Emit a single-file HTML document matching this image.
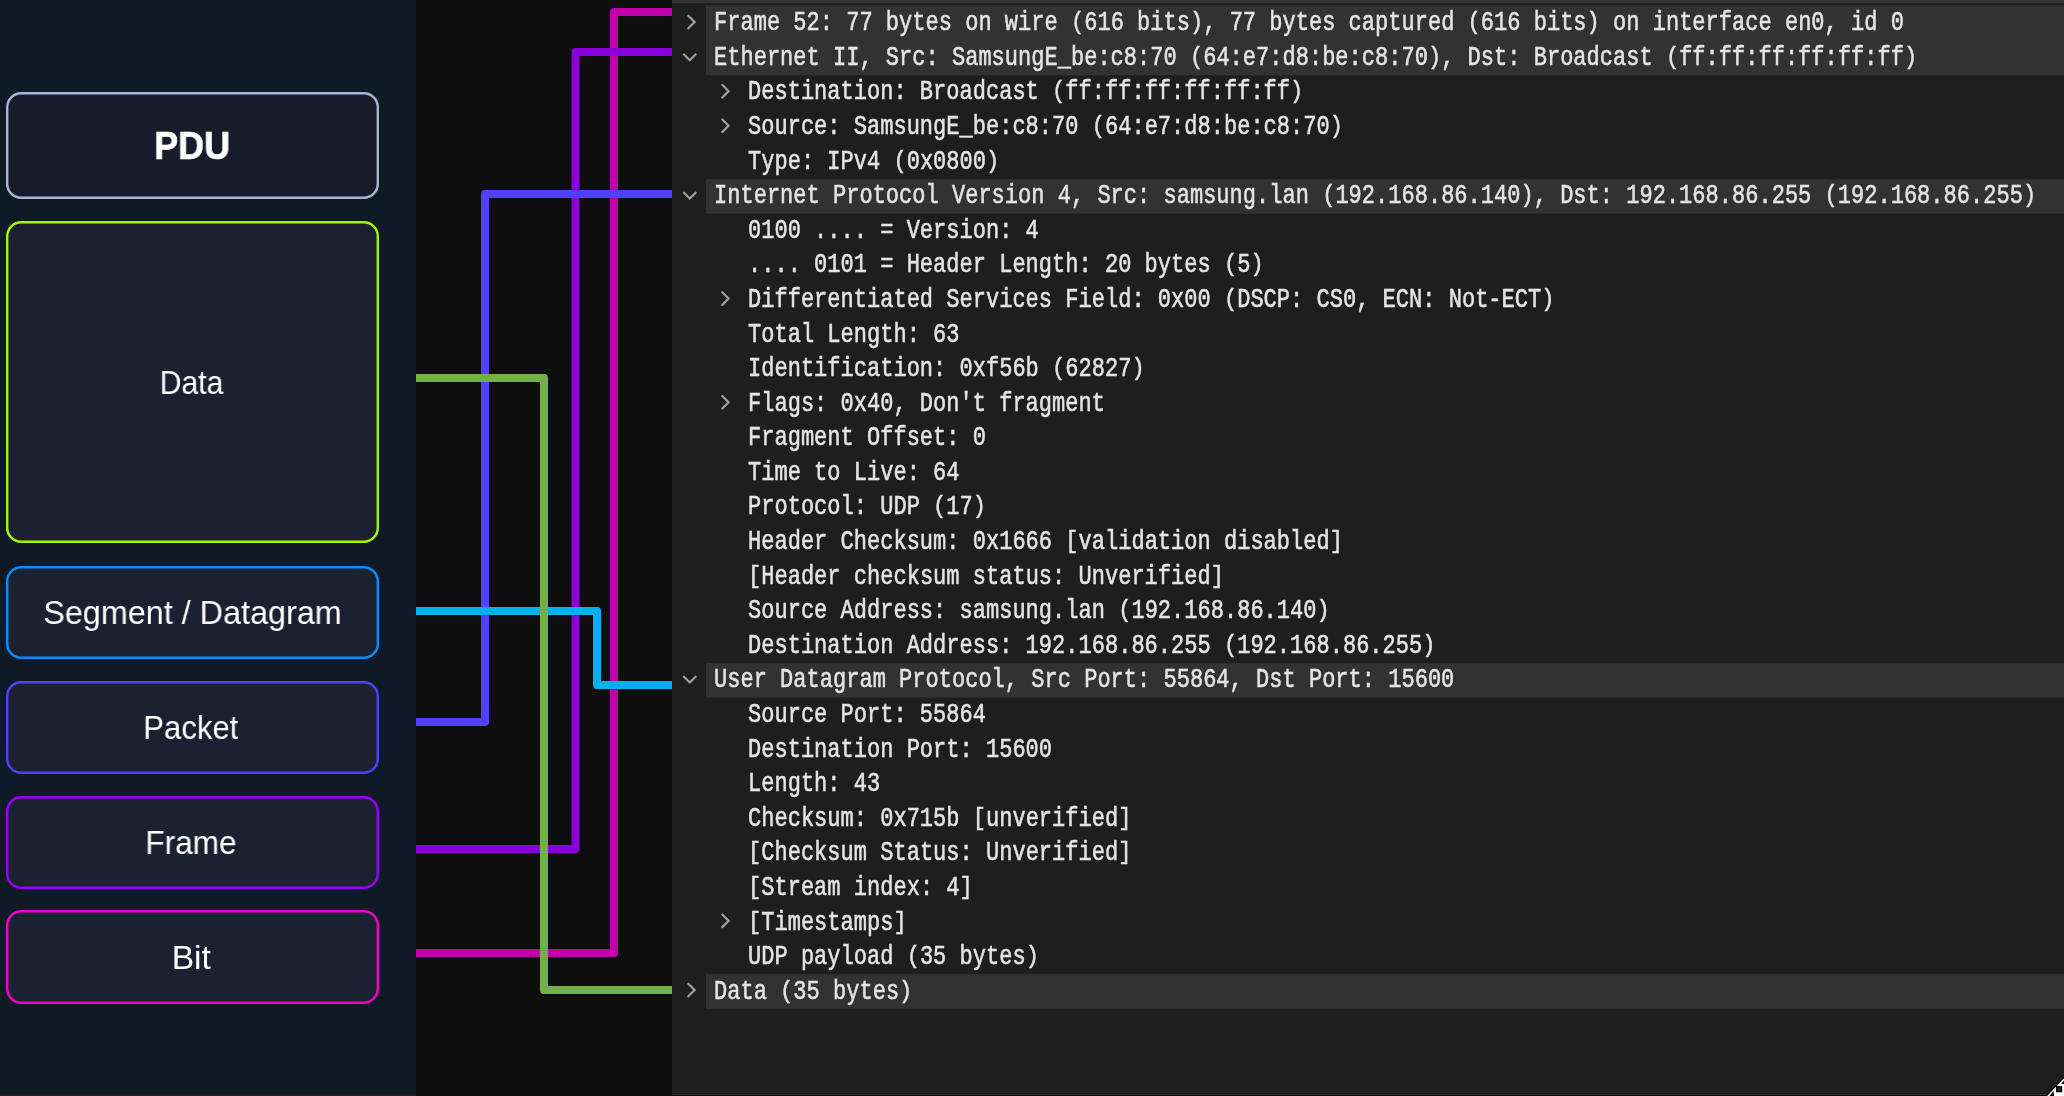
<!DOCTYPE html>
<html><head><meta charset="utf-8"><style>
html,body{margin:0;padding:0;}
body{width:2064px;height:1096px;overflow:hidden;position:relative;background:#1e1e1e;}
#left{position:absolute;left:0;top:0;width:416px;height:1094px;background:#101a26;}
#mid{position:absolute;left:416px;top:0;width:256px;height:1096px;background:#0e0e0e;}
#right{position:absolute;left:672px;top:0;width:1392px;height:1096px;background:#1e1e1e;}
svg{position:absolute;left:0;top:0;}
.r{position:absolute;white-space:pre;font-family:"Liberation Mono",monospace;font-size:22px;line-height:34px;color:#e4e4e4;transform:scaleY(1.26);transform-origin:0 17px;letter-spacing:0.018px;-webkit-font-smoothing:antialiased;will-change:transform;-webkit-text-stroke:0.45px #e4e4e4;}
.lb{-webkit-font-smoothing:antialiased;will-change:transform;position:absolute;left:0;width:385px;height:100px;line-height:100px;text-align:center;font-family:"Liberation Sans",sans-serif;color:#fff;white-space:pre;}
.p{display:inline-block;transform:scaleY(0.86);transform-origin:0 15px;}
.b{font-weight:bold;-webkit-text-stroke:0.6px #fff;}
</style></head><body>
<div id="left"></div><div id="mid"></div><div id="right"></div>
<svg width="2064" height="1096" viewBox="0 0 2064 1096">
<rect x="672" y="0" width="1392" height="3.6" fill="#333333"/><rect x="672" y="3.6" width="1392" height="1.5" fill="#1b1b1b"/><rect x="672" y="5.1" width="1392" height="1.1" fill="#262626"/><rect x="706" y="5.1" width="1358" height="1.1" fill="#363636"/>
<rect x="706" y="6.2" width="1358" height="69.14" fill="#323232"/><rect x="706" y="179.05" width="1358" height="34.57" fill="#323232"/><rect x="706" y="663.03" width="1358" height="34.57" fill="#323232"/><rect x="706" y="974.16" width="1358" height="34.57" fill="#323232"/><path d="M688.3,15.7L694.6,22L688.3,28.3M684,54.47L689.8,60.27L695.6,54.47M722.3,84.84L728.6,91.14L722.3,97.44M722.3,119.41L728.6,125.71L722.3,132.01M684,192.75L689.8,198.55L695.6,192.75M722.3,292.26L728.6,298.56L722.3,304.86M722.3,395.97L728.6,402.27L722.3,408.57M684,676.73L689.8,682.53L695.6,676.73M722.3,914.52L728.6,920.82L722.3,927.12M688.3,983.66L694.6,989.96L688.3,996.26" fill="none" stroke="#a0a0a0" stroke-width="2.2" stroke-linecap="round" stroke-linejoin="miter"/>
<rect x="7.2" y="93.2" width="370.6" height="104.6" rx="14" fill="#161c29" stroke="#a9b5d2" stroke-width="2.4"/><rect x="7.2" y="222.2" width="370.6" height="319.6" rx="14" fill="#1b2131" stroke="#a0f800" stroke-width="2.4"/><rect x="7.2" y="567.2" width="370.6" height="90.6" rx="14" fill="#1b2131" stroke="#0a8cff" stroke-width="2.4"/><rect x="7.2" y="682.2" width="370.6" height="90.6" rx="14" fill="#1b2131" stroke="#5040ff" stroke-width="2.4"/><rect x="7.2" y="797.2" width="370.6" height="90.6" rx="14" fill="#1b2131" stroke="#9600ff" stroke-width="2.4"/><rect x="7.2" y="911.2" width="370.6" height="91.6" rx="14" fill="#1b2131" stroke="#f000cc" stroke-width="2.4"/>
<path d="M416,953H614V12H672" fill="none" stroke="#c000ac" stroke-width="8" stroke-linejoin="round" stroke-linecap="butt"/><path d="M416,849H575.5V52H672" fill="none" stroke="#8a00d8" stroke-width="8" stroke-linejoin="round" stroke-linecap="butt"/><path d="M416,722H485V194H672" fill="none" stroke="#5040ff" stroke-width="8" stroke-linejoin="round" stroke-linecap="butt"/><path d="M416,611H597V685H672" fill="none" stroke="#00b0f0" stroke-width="8" stroke-linejoin="round" stroke-linecap="butt"/><path d="M416,378H544V990H672" fill="none" stroke="#72ae4a" stroke-width="8" stroke-linejoin="round" stroke-linecap="butt"/>
<rect x="672" y="1093" width="1392" height="1" fill="#171717"/><rect x="672" y="1094" width="1392" height="1" fill="#353535"/><rect x="672" y="1095" width="1392" height="1" fill="#0c0c0c"/>
<polygon points="2045.5,1096 2064,1076.5 2064,1096" fill="#000"/>
<polygon points="2047.2,1096 2064,1078.3 2064,1096" fill="#fff"/>
<polygon points="2049.5,1096 2053.6,1091 2054,1096" fill="#000"/>
<polygon points="2061,1084 2064,1080.5 2064,1084" fill="#000"/>
<rect x="2056.6" y="1086.6" width="5" height="5" fill="#1e1e1e" stroke="#000" stroke-width="1.3"/>
</svg>
<div class="lb b" style="top:95.5px;font-size:39px;transform:translateX(-0.3px) scaleX(0.92)">PDU</div><div class="lb" style="top:332.7px;font-size:33px;transform:translateX(-1px) scaleX(0.915)">Data</div><div class="lb" style="top:563.2px;font-size:33px;transform:translateX(0px) scaleX(0.98)">Segment / Datagram</div><div class="lb" style="top:678px;font-size:33px;transform:translateX(-1.7px) scaleX(0.942)">Packet</div><div class="lb" style="top:793px;font-size:33px;transform:translateX(-1.5px) scaleX(0.957)">Frame</div><div class="lb" style="top:908px;font-size:33px;transform:translateX(-1.2px) scaleX(1.02)">Bit</div>
<div class="r" style="left:714.1px;top:7.2px">Frame 52: 77 bytes on wire <span class="p">(</span>616 bits<span class="p">)</span>, 77 bytes captured <span class="p">(</span>616 bits<span class="p">)</span> on interface en0, id 0</div><div class="r" style="left:714.1px;top:41.79px">Ethernet II, Src: SamsungE_be:c8:70 <span class="p">(</span>64:e7:d8:be:c8:70<span class="p">)</span>, Dst: Broadcast <span class="p">(</span>ff:ff:ff:ff:ff:ff<span class="p">)</span></div><div class="r" style="left:748.1px;top:76.38px">Destination: Broadcast <span class="p">(</span>ff:ff:ff:ff:ff:ff<span class="p">)</span></div><div class="r" style="left:748.1px;top:110.98px">Source: SamsungE_be:c8:70 <span class="p">(</span>64:e7:d8:be:c8:70<span class="p">)</span></div><div class="r" style="left:748.1px;top:145.57px">Type: IPv4 <span class="p">(</span>0x0800<span class="p">)</span></div><div class="r" style="left:714.1px;top:180.16px">Internet Protocol Version 4, Src: samsung.lan <span class="p">(</span>192.168.86.140<span class="p">)</span>, Dst: 192.168.86.255 <span class="p">(</span>192.168.86.255<span class="p">)</span></div><div class="r" style="left:748.1px;top:214.75px">0100 .... = Version: 4</div><div class="r" style="left:748.1px;top:249.34px">.... 0101 = Header Length: 20 bytes <span class="p">(</span>5<span class="p">)</span></div><div class="r" style="left:748.1px;top:283.94px">Differentiated Services Field: 0x00 <span class="p">(</span>DSCP: CS0, ECN: Not-ECT<span class="p">)</span></div><div class="r" style="left:748.1px;top:318.53px">Total Length: 63</div><div class="r" style="left:748.1px;top:353.12px">Identification: 0xf56b <span class="p">(</span>62827<span class="p">)</span></div><div class="r" style="left:748.1px;top:387.71px">Flags: 0x40, Don&#x27;t fragment</div><div class="r" style="left:748.1px;top:422.3px">Fragment Offset: 0</div><div class="r" style="left:748.1px;top:456.9px">Time to Live: 64</div><div class="r" style="left:748.1px;top:491.49px">Protocol: UDP <span class="p">(</span>17<span class="p">)</span></div><div class="r" style="left:748.1px;top:526.08px">Header Checksum: 0x1666 <span class="p">[</span>validation disabled<span class="p">]</span></div><div class="r" style="left:748.1px;top:560.67px"><span class="p">[</span>Header checksum status: Unverified<span class="p">]</span></div><div class="r" style="left:748.1px;top:595.26px">Source Address: samsung.lan <span class="p">(</span>192.168.86.140<span class="p">)</span></div><div class="r" style="left:748.1px;top:629.86px">Destination Address: 192.168.86.255 <span class="p">(</span>192.168.86.255<span class="p">)</span></div><div class="r" style="left:714.1px;top:664.45px">User Datagram Protocol, Src Port: 55864, Dst Port: 15600</div><div class="r" style="left:748.1px;top:699.04px">Source Port: 55864</div><div class="r" style="left:748.1px;top:733.63px">Destination Port: 15600</div><div class="r" style="left:748.1px;top:768.22px">Length: 43</div><div class="r" style="left:748.1px;top:802.82px">Checksum: 0x715b <span class="p">[</span>unverified<span class="p">]</span></div><div class="r" style="left:748.1px;top:837.41px"><span class="p">[</span>Checksum Status: Unverified<span class="p">]</span></div><div class="r" style="left:748.1px;top:872px"><span class="p">[</span>Stream index: 4<span class="p">]</span></div><div class="r" style="left:748.1px;top:906.59px"><span class="p">[</span>Timestamps<span class="p">]</span></div><div class="r" style="left:748.1px;top:941.18px">UDP payload <span class="p">(</span>35 bytes<span class="p">)</span></div><div class="r" style="left:714.1px;top:975.78px">Data <span class="p">(</span>35 bytes<span class="p">)</span></div>
</body></html>
